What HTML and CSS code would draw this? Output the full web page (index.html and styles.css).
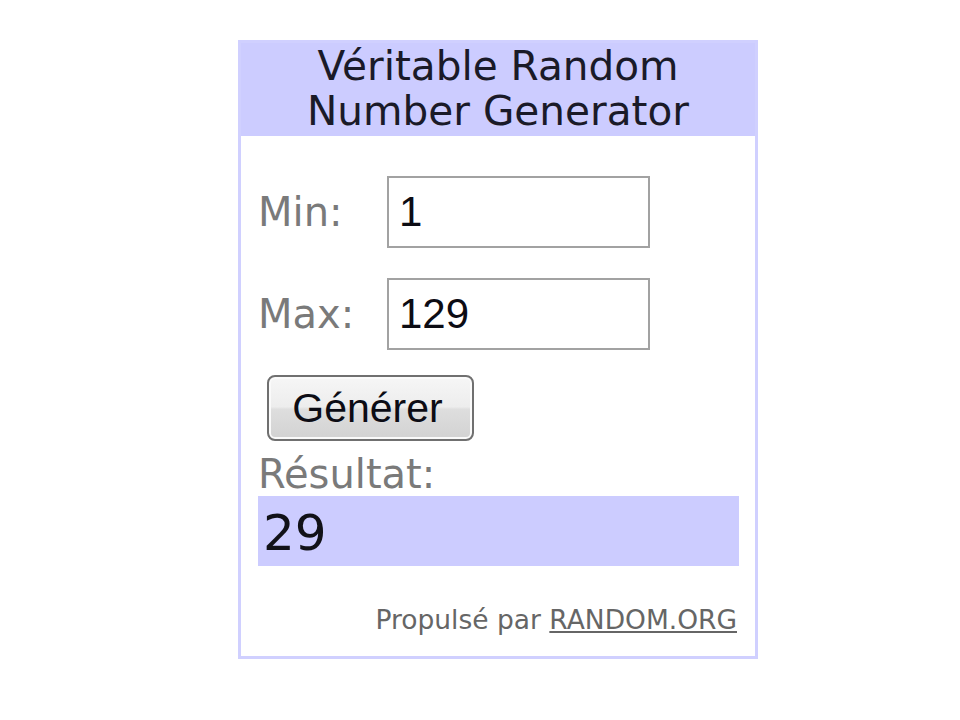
FILE: index.html
```html
<!DOCTYPE html>
<html lang="fr">
<head>
<meta charset="utf-8">
<title>Véritable Random Number Generator</title>
<link rel="stylesheet" href="styles.css">
</head>
<body>
<div class="widget">
  <div class="header">Véritable Random<br>Number Generator</div>
  <div class="content">
    <div class="row">
      <label class="label" for="min">Min:</label>
      <input class="field" id="min" type="text" value="1">
    </div>
    <div class="row row-second">
      <label class="label" for="max">Max:</label>
      <input class="field" id="max" type="text" value="129">
    </div>
    <button class="btn" type="button">Générer</button>
    <div class="result-label">Résultat:</div>
    <div class="result">29</div>
    <div class="footer">Propulsé par <a class="footer-link" href="#">RANDOM.ORG</a></div>
  </div>
</div>
</body>
</html>
```
FILE: styles.css
```css
html, body {
  margin: 0;
  padding: 0;
  background: #ffffff;
}

body {
  font-family: "DejaVu Sans", Verdana, sans-serif;
}

.widget {
  box-sizing: border-box;
  width: 520px;
  margin: 40px 0 0 238px;
  border: 3px solid #d0d0ff;
  background: #ffffff;
}

.header {
  background: #ccccff;
  color: #1a1a28;
  text-align: center;
  font-size: 40.6px;
  line-height: 45px;
  padding: 1px 0 2px;
}

.content {
  padding: 40px 16px 21px 17px;
  display: flex;
  flex-direction: column;
  align-items: stretch;
}

.row {
  display: flex;
  align-items: center;
  height: 72px;
}

.row-second {
  margin-top: 30px;
}

.label {
  width: 129px;
  flex: none;
  font-size: 40px;
  color: #7a7a7a;
}

.field {
  box-sizing: border-box;
  width: 263px;
  height: 72px;
  margin: 0;
  border: 2px solid #a2a2a2;
  padding: 0 0 0 10px;
  font-family: "Liberation Sans", Arial, sans-serif;
  font-size: 42px;
  color: #0c0c14;
  background: #ffffff;
  outline: none;
}

.btn {
  align-self: flex-start;
  box-sizing: border-box;
  width: 207px;
  height: 66px;
  margin: 25px 0 0 9px;
  padding: 0 6px 0 0;
  border: 2px solid #707070;
  border-radius: 8px;
  background: linear-gradient(#f6f6f6 0%, #ededed 48%, #dedede 52%, #d2d2d2 100%);
  box-shadow: inset 0 0 0 2px #fafafa;
  font-family: "Liberation Sans", Arial, sans-serif;
  font-size: 41px;
  color: #0c0c14;
}

.result-label {
  margin-top: 12px;
  font-size: 40px;
  line-height: 43px;
  color: #7a7a7a;
}

.result {
  box-sizing: border-box;
  height: 70px;
  padding: 4px 0 0 5px;
  background: #ccccff;
  font-size: 50px;
  line-height: 66px;
  color: #111118;
}

.footer {
  margin-top: 39px;
  text-align: right;
  font-size: 26.5px;
  line-height: 30px;
  color: #666666;
  padding-right: 2px;
}

.footer-link {
  color: #666666;
  text-decoration: underline;
}
```
